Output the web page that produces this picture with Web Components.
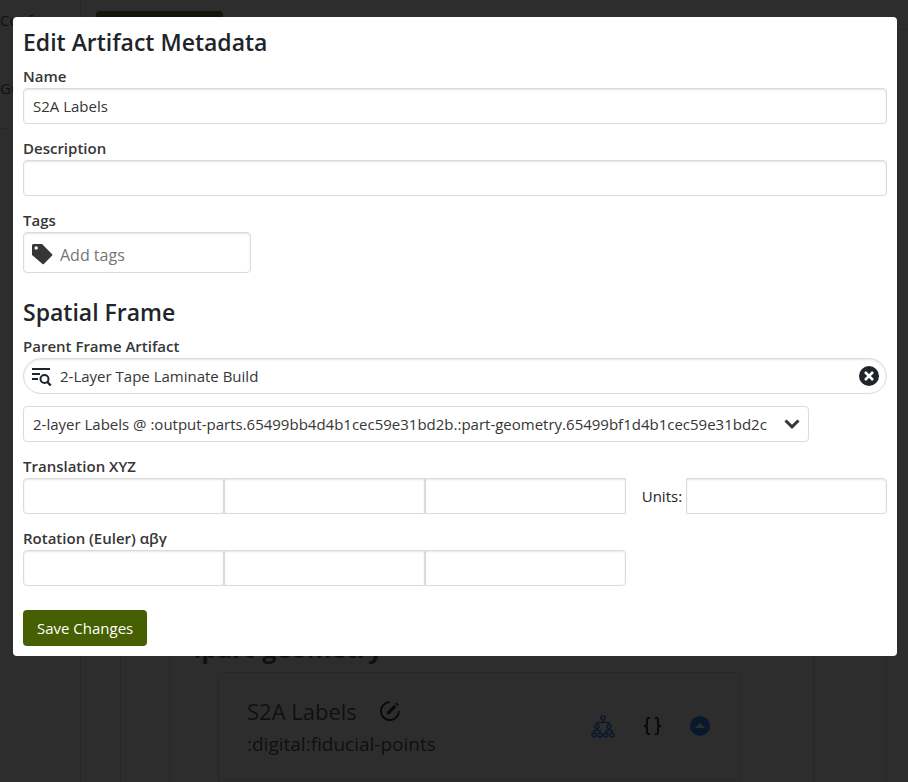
<!DOCTYPE html>
<html lang="en">
<head>
<meta charset="utf-8">
<meta name="viewport" content="width=device-width, initial-scale=1">
<title>Edit Artifact Metadata</title>
<style>
  html, body {
    margin: 0;
    height: 100%;
  }
  body {
    overflow: hidden;
    background: #fff;
    color: #212529;
    font: 15px/24px "Open Sans", "Noto Sans", sans-serif;
  }
</style>
</head>
<body>
<artifact-page inert></artifact-page>

<modal-dialog>
  <artifact-editor></artifact-editor>
</modal-dialog>

<script>
const icons = {
  tag: '<path fill-rule="evenodd" d="M1.500 0H10l10.200 10.200a1 1 0 0 1 0 1.300l-8.400 8.400a1 1 0 0 1-1.300 0L0 11V1.500A1.500 1.500 0 0 1 1.500 0zM4.200 2.300a1.700 1.700 0 1 0 0 3.400 1.700 1.700 0 0 0 0-3.400z"/>',
  searchList: '<g fill="none" stroke="currentColor" stroke-width="2"><path d="M0 3h18M0 8h8M0 13h6"/><circle cx="12.500" cy="13" r="4"/><path d="M15.200 15.800l3.500 3.700" stroke-width="2.400"/></g>',
  clear: '<circle cx="10" cy="10" r="10"/><path d="M6 6l8 8M14 6l-8 8" stroke="#fff" stroke-width="2.500"/>',
  chevron: '<path d="M1.500 1.500L8 7.800l6.500-6.300" fill="none" stroke="currentColor" stroke-width="3"/>',
  edit: '<path d="M10 1.100A9 9 0 1 0 18.900 10" fill="none" stroke="currentColor" stroke-width="2"/><path d="M7 11l7.200-7.200 2.200 2.200-7.200 7.200H7zM15.200 2.800l1.400-1.400 2.200 2.200-1.400 1.400z"/>',
  tree: '<g fill="none" stroke="currentColor" stroke-width="1.600"><circle cx="12" cy="3" r="2"/><circle cx="6" cy="11.500" r="2"/><circle cx="18" cy="11.500" r="2"/><circle cx="3" cy="20" r="2"/><circle cx="9" cy="20" r="2"/><circle cx="15" cy="20" r="2"/><circle cx="21" cy="20" r="2"/><path d="M12 5v2.500M6 9.500v-2h12v2M6 13.500v2M18 13.500v2M3 18v-2.500h6V18M15 18v-2.500h6V18"/></g>',
  braces: '<g fill="none" stroke="currentColor" stroke-width="2"><path d="M7 1H5.500Q4 1 4 3v4q0 2-3 2 3 0 3 2v4q0 2 1.500 2H7M12 1h1.500Q15 1 15 3v4q0 2 3 2-3 0-3 2v4q0 2-1.500 2H12"/></g>',
  up: '<circle cx="10" cy="10" r="10"/><path d="M5 12l5-5 5 5z" fill="#fff"/>'
}

const icon = (name, width, height) =>
  `<svg width="${width}" height="${height}" viewBox="0 0 ${width} ${height}" fill="currentColor" aria-hidden="true">${icons[name]}</svg>`

const controlStyles = `
  *, *::before {
    box-sizing: border-box;
  }
  label {
    display: block;
    color: #363636;
    font-weight: 600;
  }
  input, select {
    display: block;
    width: 100%;
    min-width: 0;
    height: 36px;
    margin: 0;
    padding: 0 9px;
    border: 1px solid #dbdbdb;
    border-radius: 4px;
    background: #fff;
    box-shadow: inset 0 1px 2px rgba(10, 10, 10, .1);
    color: #363636;
    font: inherit;
    outline: 0;
  }
  input:focus, select:focus {
    border-color: #465f00;
  }
  input::placeholder {
    color: #757575;
    opacity: 1;
  }
  svg {
    display: block;
    flex: none;
  }
`

customElements.define('modal-dialog', class extends HTMLElement {
  constructor() {
    super()
    this.attachShadow({mode: 'open'})
    this.shadowRoot.innerHTML = `
    <style>
    :host {
      position: fixed;
      inset: 0;
      overflow: auto;
      padding: 17px 11px 17px 13px;
      background: rgba(10, 10, 10, .86);
    }
    .box {
      padding: 10px;
      border-radius: 4px;
      background: #fff;
    }
    </style>
    <div class="box" role="dialog" aria-modal="true">
      <slot></slot>
    </div>
    `
  }
})

customElements.define('section-title', class extends HTMLElement {
  constructor() {
    super()
    this.attachShadow({mode: 'open'})
    this.shadowRoot.innerHTML = `
    <style>
    :host {
      display: block;
      margin-bottom: 7px;
    }
    h2 {
      margin: 0;
      font-size: 23px;
      font-weight: 600;
      line-height: 30px;
    }
    </style>
    <h2><slot></slot></h2>
    `
  }
})

customElements.define('text-field', class extends HTMLElement {
  constructor() {
    super()
    this.attachShadow({mode: 'open'})
    this.shadowRoot.innerHTML = `
    <style>
    ${controlStyles}
    :host {
      display: block;
    }
    </style>
    <label for="input"><slot></slot></label>
    <input id="input" type="text">
    `
    this.shadowRoot.querySelector('input').value = this.getAttribute('value') || ''
  }
})

customElements.define('tags-field', class extends HTMLElement {
  constructor() {
    super()
    this.attachShadow({mode: 'open'})
    this.shadowRoot.innerHTML = `
    <style>
    ${controlStyles}
    :host {
      display: block;
    }
    .control {
      display: flex;
      align-items: center;
      gap: 7px;
      width: 228px;
      max-width: 100%;
      height: 41px;
      padding: 3px 8px 0;
      border: 1px solid #dbdbdb;
      border-radius: 4px;
      box-shadow: inset 0 1px 2px rgba(10, 10, 10, .1);
      color: #363636;
    }
    input {
      height: 26px;
      padding: 2px 0 0;
      border: 0;
      box-shadow: none;
      font-size: 16px;
    }
    </style>
    <label for="input"><slot></slot></label>
    <div class="control">
      ${icon('tag', 21, 21)}
      <input id="input" type="text" placeholder="Add tags">
    </div>
    `
  }
})

customElements.define('lookup-field', class extends HTMLElement {
  constructor() {
    super()
    this.attachShadow({mode: 'open'})
    this.shadowRoot.innerHTML = `
    <style>
    ${controlStyles}
    :host {
      display: block;
    }
    .control {
      display: flex;
      align-items: center;
      gap: 8px;
      height: 36px;
      padding: 0 7px 0 8px;
      border: 1px solid #dbdbdb;
      border-radius: 18px;
      box-shadow: inset 0 1px 2px rgba(10, 10, 10, .1);
    }
    input {
      height: 24px;
      padding: 0;
      border: 0;
      box-shadow: none;
    }
    button {
      padding: 0;
      border: 0;
      background: none;
      color: #212529;
      cursor: pointer;
    }
    </style>
    <label for="input"><slot></slot></label>
    <div class="control">
      ${icon('searchList', 20, 20)}
      <input id="input" type="text">
      <button type="button" aria-label="Clear">${icon('clear', 20, 20)}</button>
    </div>
    `
    const input = this.shadowRoot.querySelector('input')
    input.value = this.getAttribute('value') || ''
    this.shadowRoot.querySelector('button').addEventListener('click', () => {
      input.value = ''
      input.focus()
    })
  }
})

customElements.define('vector-field', class extends HTMLElement {
  constructor() {
    super()
    this.attachShadow({mode: 'open'})
    const axes = this.getAttribute('axes').split(' ')
    this.shadowRoot.innerHTML = `
    <style>
    ${controlStyles}
    :host {
      display: block;
    }
    .inputs {
      display: flex;
    }
    input {
      flex: 1;
      border-radius: 0;
    }
    input:first-child {
      border-radius: 4px 0 0 4px;
    }
    :host([rounded]) input:last-child {
      border-radius: 0 4px 4px 0;
    }
    </style>
    <label for="axis-0"><slot></slot></label>
    <div class="inputs">
      ${axes.map((axis, i) => `<input id="axis-${i}" type="text" inputmode="decimal" aria-label="${axis}">`).join('')}
    </div>
    `
  }
})

customElements.define('artifact-editor', class extends HTMLElement {
  constructor() {
    super()
    this.attachShadow({mode: 'open'})
    this.shadowRoot.innerHTML = this.template
  }

  get template() {
    return `
    <style>
    ${controlStyles}
    :host {
      display: block;
    }
    form, section {
      display: flex;
      flex-direction: column;
    }
    form {
      gap: 24px;
    }
    .fields {
      display: grid;
      gap: 12px;
    }
    .select {
      position: relative;
      justify-self: start;
      min-width: 91%;
      max-width: 100%;
    }
    select {
      appearance: none;
      padding-right: 32px;
      box-shadow: none;
      text-overflow: ellipsis;
    }
    .select svg {
      position: absolute;
      top: 13px;
      right: 9px;
      color: #363636;
      pointer-events: none;
    }
    .transform {
      display: grid;
      grid-template-columns: 3fr auto 1fr;
      align-items: end;
      row-gap: 12px;
    }
    .transform label {
      padding: 6px 4px 6px 16px;
      color: inherit;
      font-weight: 400;
    }
    .transform input {
      border-radius: 0 4px 4px 0;
    }
    .save {
      align-self: flex-start;
      height: 36px;
      padding: 0 14px;
      border: 0;
      border-radius: 4px;
      background: #465f00;
      color: #fff;
      font: inherit;
      cursor: pointer;
    }
    </style>
    <form>
      <section>
        <section-title>Edit Artifact Metadata</section-title>
        <div class="fields">
          <text-field value="S2A Labels">Name</text-field>
          <text-field>Description</text-field>
          <tags-field>Tags</tags-field>
        </div>
      </section>

      <section>
        <section-title>Spatial Frame</section-title>
        <div class="fields">
          <lookup-field value="2-Layer Tape Laminate Build">Parent Frame Artifact</lookup-field>
          <div class="select">
            <select aria-label="Frame">
              <option>2-layer Labels @ :output-parts.65499bb4d4b1cec59e31bd2b.:part-geometry.65499bf1d4b1cec59e31bd2c</option>
            </select>
            ${icon('chevron', 16, 10)}
          </div>
          <div class="transform">
            <vector-field axes="X Y Z">Translation XYZ</vector-field>
            <label for="units">Units:</label>
            <input id="units" type="text">
            <vector-field axes="α β γ" rounded>Rotation (Euler) αβγ</vector-field>
          </div>
        </div>
      </section>

      <button class="save" type="button">Save Changes</button>
    </form>
    `
  }
})

customElements.define('artifact-card', class extends HTMLElement {
  constructor() {
    super()
    this.attachShadow({mode: 'open'})
    this.shadowRoot.innerHTML = `
    <style>
    :host {
      display: block;
      border: 1px solid #dbdbdb;
      border-bottom: 0;
      border-radius: 4px 4px 0 0;
      color: #363636;
    }
    header {
      display: flex;
      align-items: center;
      justify-content: space-between;
      height: 106px;
      padding: 0 30px 0 28px;
      border-bottom: 1px solid #dbdbdb;
    }
    .name, .actions {
      display: flex;
      align-items: center;
    }
    .name {
      gap: 23px;
      font-size: 22px;
      line-height: 36px;
    }
    .type {
      font-size: 19px;
      line-height: 30px;
    }
    .actions {
      gap: 28px;
    }
    button {
      padding: 0;
      border: 0;
      background: none;
      color: #0a0a0a;
    }
    .link {
      color: #0d6efd;
    }
    svg {
      display: block;
    }
    footer {
      height: 2px;
    }
    </style>
    <header>
      <div>
        <div class="name">
          <slot name="name"></slot>
          <button type="button" aria-label="Edit">${icon('edit', 20, 20)}</button>
        </div>
        <div class="type"><slot name="type"></slot></div>
      </div>
      <div class="actions">
        <button class="link" type="button" aria-label="Tree">${icon('tree', 24, 23)}</button>
        <button type="button" aria-label="Data">${icon('braces', 19, 18)}</button>
        <button class="link" type="button" aria-label="Collapse">${icon('up', 20, 20)}</button>
      </div>
    </header>
    <footer></footer>
    `
  }
})

customElements.define('artifact-page', class extends HTMLElement {
  constructor() {
    super()
    this.attachShadow({mode: 'open'})
    this.shadowRoot.innerHTML = `
    <style>
    *, :host {
      box-sizing: border-box;
    }
    :host {
      display: flex;
      height: 100%;
      overflow: hidden;
      color: #363636;
    }
    nav {
      flex: none;
      width: 81px;
      border-right: 1px solid #dbdbdb;
    }
    .links {
      display: flex;
      flex-direction: column;
      gap: 44px;
      padding: 8px 0 28px;
      border-bottom: 1px solid #dbdbdb;
    }
    nav a {
      color: inherit;
      text-decoration: none;
    }
    main {
      display: flex;
      flex-direction: column;
      flex: 1;
      min-width: 0;
    }
    .toolbar {
      display: flex;
      align-items: center;
      flex: none;
      padding: 11px 0 16px 15px;
    }
    .toolbar button {
      width: 127px;
      height: 36px;
      border: 0;
      border-radius: 4px;
      background: #465f00;
    }
    .toolbar hr {
      flex: 1;
      margin: 0;
      border: 0;
      border-top: 1px solid #dbdbdb;
    }
    .level {
      display: flex;
      flex-direction: column;
      flex: 1;
      padding: 0 72px 0 48px;
      border: solid #dbdbdb;
      border-width: 0 1px;
    }
    .toolbar + .level {
      margin: 0 21px 0 39px;
    }
    .level .level {
      justify-content: flex-end;
    }
    h3 {
      margin: 0 0 6px -24px;
      font-size: 25px;
      font-weight: 700;
      line-height: 36px;
    }
    </style>
    <nav>
      <div class="links">
        <a href="#config">Config</a>
        <a href="#guide">Gu</a>
      </div>
    </nav>
    <main>
      <div class="toolbar">
        <button type="button" aria-label="New"></button>
        <hr>
      </div>
      <div class="level">
        <div class="level">
          <h3>:part-geometry</h3>
          <artifact-card>
            <span slot="name">S2A Labels</span>
            <span slot="type">:digital:fiducial-points</span>
          </artifact-card>
        </div>
      </div>
    </main>
    `
  }
})
</script>
</body>
</html>
